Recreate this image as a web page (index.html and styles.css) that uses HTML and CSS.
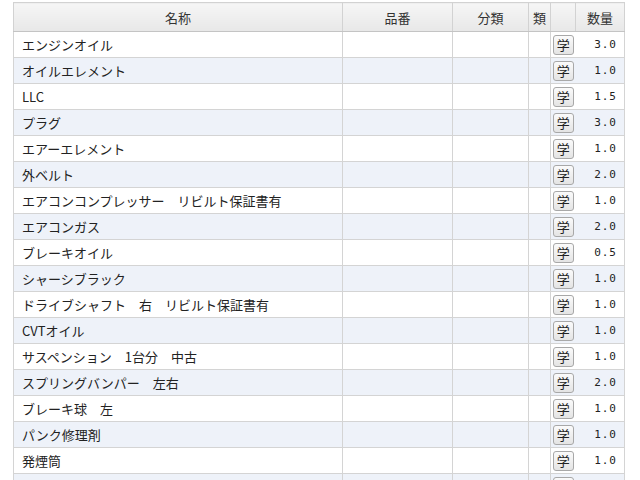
FILE: index.html
```html
<!DOCTYPE html>
<html lang="ja">
<head>
<meta charset="utf-8">
<link rel="stylesheet" href="styles.css">
</head>
<body>
<table class="parts">
  <colgroup>
    <col class="c-name"><col class="c-no"><col class="c-cat"><col class="c-kind"><col class="c-btn"><col class="c-qty">
  </colgroup>
  <thead>
    <tr><th>名称</th><th>品番</th><th>分類</th><th class="kind">類</th><th class="btnh"></th><th>数量</th></tr>
  </thead>
  <tbody>
    <tr><td class="name">エンジンオイル</td><td></td><td></td><td class="kind"></td><td class="btn"><span class="gaku">学</span></td><td class="qty">3.0</td></tr>
    <tr><td class="name">オイルエレメント</td><td></td><td></td><td class="kind"></td><td class="btn"><span class="gaku">学</span></td><td class="qty">1.0</td></tr>
    <tr><td class="name">LLC</td><td></td><td></td><td class="kind"></td><td class="btn"><span class="gaku">学</span></td><td class="qty">1.5</td></tr>
    <tr><td class="name">プラグ</td><td></td><td></td><td class="kind"></td><td class="btn"><span class="gaku">学</span></td><td class="qty">3.0</td></tr>
    <tr><td class="name">エアーエレメント</td><td></td><td></td><td class="kind"></td><td class="btn"><span class="gaku">学</span></td><td class="qty">1.0</td></tr>
    <tr><td class="name">外ベルト</td><td></td><td></td><td class="kind"></td><td class="btn"><span class="gaku">学</span></td><td class="qty">2.0</td></tr>
    <tr><td class="name">エアコンコンプレッサー　リビルト保証書有</td><td></td><td></td><td class="kind"></td><td class="btn"><span class="gaku">学</span></td><td class="qty">1.0</td></tr>
    <tr><td class="name">エアコンガス</td><td></td><td></td><td class="kind"></td><td class="btn"><span class="gaku">学</span></td><td class="qty">2.0</td></tr>
    <tr><td class="name">ブレーキオイル</td><td></td><td></td><td class="kind"></td><td class="btn"><span class="gaku">学</span></td><td class="qty">0.5</td></tr>
    <tr><td class="name">シャーシブラック</td><td></td><td></td><td class="kind"></td><td class="btn"><span class="gaku">学</span></td><td class="qty">1.0</td></tr>
    <tr><td class="name">ドライブシャフト　右　リビルト保証書有</td><td></td><td></td><td class="kind"></td><td class="btn"><span class="gaku">学</span></td><td class="qty">1.0</td></tr>
    <tr><td class="name">CVTオイル</td><td></td><td></td><td class="kind"></td><td class="btn"><span class="gaku">学</span></td><td class="qty">1.0</td></tr>
    <tr><td class="name">サスペンション　1台分　中古</td><td></td><td></td><td class="kind"></td><td class="btn"><span class="gaku">学</span></td><td class="qty">1.0</td></tr>
    <tr><td class="name">スプリングバンパー　左右</td><td></td><td></td><td class="kind"></td><td class="btn"><span class="gaku">学</span></td><td class="qty">2.0</td></tr>
    <tr><td class="name">ブレーキ球　左</td><td></td><td></td><td class="kind"></td><td class="btn"><span class="gaku">学</span></td><td class="qty">1.0</td></tr>
    <tr><td class="name">パンク修理剤</td><td></td><td></td><td class="kind"></td><td class="btn"><span class="gaku">学</span></td><td class="qty">1.0</td></tr>
    <tr><td class="name">発煙筒</td><td></td><td></td><td class="kind"></td><td class="btn"><span class="gaku">学</span></td><td class="qty">1.0</td></tr>
    <tr><td class="name"></td><td></td><td></td><td class="kind"></td><td class="btn"><span class="gaku">学</span></td><td class="qty"></td></tr>
  </tbody>
</table>
</body>
</html>
```

FILE: styles.css
```css
html, body {
  margin: 0;
  padding: 0;
  background: #ffffff;
  overflow: hidden;
  height: 480px;
}
body {
  font-family: "Noto Sans CJK JP", "Noto Sans", sans-serif;
  font-size: 13px;
  color: #222;
}
.parts {
  margin: 2px 0 0 13px;
  border-collapse: collapse;
  table-layout: fixed;
  width: 611px;
}
.c-name { width: 329px; }
.c-no { width: 110px; }
.c-cat { width: 76px; }
.c-kind { width: 22px; }
.c-btn { width: 25px; }
.c-qty { width: 49px; }
.parts th {
  height: 29px;
  padding: 0;
  box-sizing: border-box;
  font-weight: normal;
  color: #333;
  background: linear-gradient(#f6f6f6, #e8e8e8);
  border: 1px solid #d2d2d2;
  border-bottom: 1px solid #c4c4c4;
  text-align: center;
  line-height: 27px;
}
.parts th.kind { text-align: left; padding-left: 4px; }
.parts td {
  height: 26px;
  padding: 0;
  box-sizing: border-box;
  border: 1px solid #d4d4d4;
  line-height: 24px;
  white-space: nowrap;
  overflow: hidden;
}
.parts tbody tr:nth-child(even) td { background: #eef2f9; }
.parts td.name { padding-left: 8px; }
.parts td.btn { border-right: none; text-align: center; }
.parts td.qty {
  border-left: none;
  text-align: right;
  padding-right: 7px;
  font-family: "DejaVu Sans Mono", monospace;
  font-size: 11px;
  letter-spacing: 1px;
}
.gaku {
  display: inline-block;
  box-sizing: border-box;
  width: 21px;
  height: 20px;
  margin-top: 2px;
  border: 1px solid #a8a8a8;
  border-radius: 3px;
  background: linear-gradient(#fbfbfb, #e4e4e4);
  font-size: 13px;
  line-height: 18px;
  text-align: center;
  vertical-align: top;
  color: #222;
}
```
